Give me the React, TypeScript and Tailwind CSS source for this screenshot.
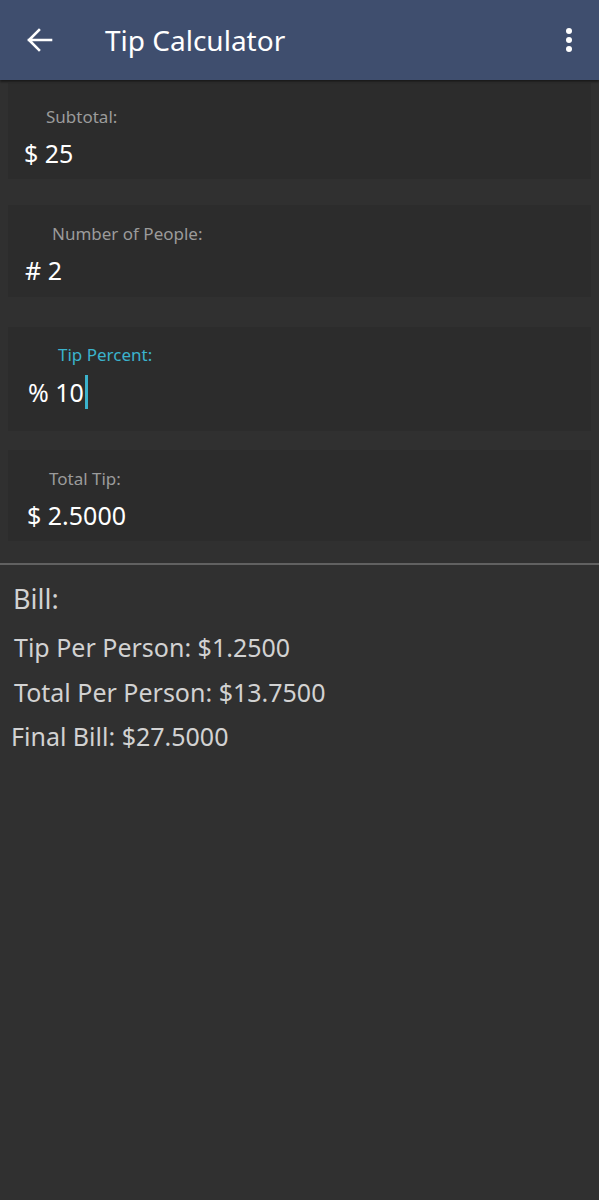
import React from "react";

const font = { fontFamily: '"Noto Sans", "Open Sans", sans-serif' };

type Field = {
  label: string;
  value: string;
  h: string;
  pt: string;
  labelPad: string;
  valuePad: string;
  focused?: boolean;
};

const FIELDS: Field[] = [
  { label: "Subtotal:", value: "$ 25", h: "h-[96px]", pt: "pt-[24px]", labelPad: "pl-[38px]", valuePad: "pl-[16px]" },
  { label: "Number of People:", value: "# 2", h: "h-[92px]", pt: "pt-[19px]", labelPad: "pl-[44px]", valuePad: "pl-[17px]" },
  { label: "Tip Percent:", value: "% 10", h: "h-[104px]", pt: "pt-[18px]", labelPad: "pl-[50px]", valuePad: "pl-[20px]", focused: true },
  { label: "Total Tip:", value: "$ 2.5000", h: "h-[91px]", pt: "pt-[19px]", labelPad: "pl-[41px]", valuePad: "pl-[19px]" },
];

// ─── input card ───────────────────────────────────────────────────────────
const InputCard = ({ label, value, h, pt, labelPad, valuePad, focused }: Field) => (
  <div className={`${h} ${pt} bg-[#2c2c2c] flex flex-col`}>
    <div className={`${labelPad} text-[17px] leading-[20px] ${focused ? "text-[#3bb3cc]" : "text-[#9b9b9b]"}`}>
      {label}
    </div>
    <div className={`${valuePad} mt-[10px] text-[25px] leading-[32px] text-white flex items-center`}>
      <span>{value}</span>
      {focused && <span className="ml-[1px] w-[3px] h-[34px] bg-[#3bb3cc]" />}
    </div>
  </div>
);

export default function App() {
  return (
    <div className="w-[599px] h-[1200px] bg-[#303030] flex flex-col" style={font}>
      {/* toolbar */}
      <div className="h-[80px] bg-[#3f4e6e] flex items-center shadow-[0_2px_2px_rgba(0,0,0,0.45)] relative z-10">
        <svg className="ml-[27px]" width="26" height="24" viewBox="0 0 26 24" fill="none">
          <path d="M2 12 H24 M12 2 L2 12 L12 22" stroke="white" strokeWidth="2.6" strokeLinecap="square" />
        </svg>
        <span className="ml-[52px] text-[28px] text-white leading-none">Tip Calculator</span>
        <div className="ml-auto mr-[27px] flex flex-col gap-[3px]">
          <span className="w-[6px] h-[6px] rounded-full bg-white" />
          <span className="w-[6px] h-[6px] rounded-full bg-white" />
          <span className="w-[6px] h-[6px] rounded-full bg-white" />
        </div>
      </div>

      {/* inputs */}
      <div className="mx-[8px] mt-[3px] flex flex-col">
        <InputCard {...FIELDS[0]} />
        <div className="h-[26px]" />
        <InputCard {...FIELDS[1]} />
        <div className="h-[30px]" />
        <InputCard {...FIELDS[2]} />
        <div className="h-[19px]" />
        <InputCard {...FIELDS[3]} />
      </div>

      <div className="mt-[22px] h-[2px] bg-[#616161]" />

      {/* bill */}
      <div className="text-[#d2d2d2]">
        <div className="pl-[13px] mt-[17px] text-[27px] leading-[34px]">Bill:</div>
        <div className="pl-[14px] mt-[15px] text-[25px] leading-[32px]">Tip Per Person: $1.2500</div>
        <div className="pl-[14px] mt-[13px] text-[25px] leading-[32px]">Total Per Person: $13.7500</div>
        <div className="pl-[11px] mt-[12px] text-[25px] leading-[32px]">Final Bill: $27.5000</div>
      </div>
    </div>
  );
}
